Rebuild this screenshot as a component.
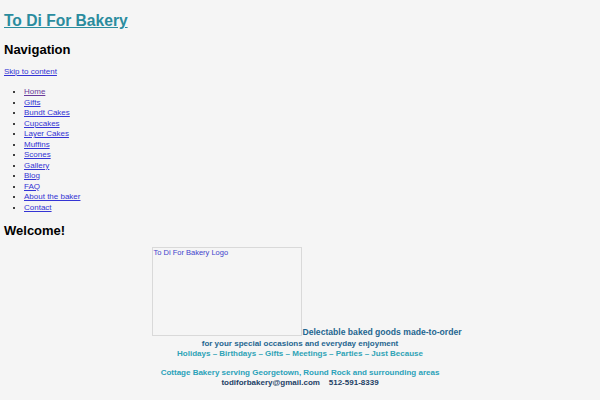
import React from 'react';

const navLinks = [
  'Home',
  'Gifts',
  'Bundt Cakes',
  'Cupcakes',
  'Layer Cakes',
  'Muffins',
  'Scones',
  'Gallery',
  'Blog',
  'FAQ',
  'About the baker',
  'Contact',
];

const App = () => {
  return (
    <div
      className="bg-[#f5f5f5] min-h-screen px-[4px] text-black"
      style={{ fontFamily: '"Liberation Sans", Arial, sans-serif' }}
    >
      {/* Site title */}
      <h1 className="pt-[11px] text-[15.6px] font-bold leading-[20px]">
        <a href="#" className="text-[#2a8c9e] underline">To Di For Bakery</a>
      </h1>

      {/* Navigation */}
      <h2 className="mt-[11px] text-[13px] leading-[16px] font-bold">Navigation</h2>
      <a href="#" className="block mt-[9px] text-[8px] leading-[10px] text-[#3434d4] underline w-max">
        Skip to content
      </a>
      <ul className="mt-[10px] list-disc pl-[20px] text-[8px] leading-[10.5px]">
        {navLinks.map((link, i) => (
          <li key={link}>
            <a href="#" className={i === 0 ? 'text-[#6a3a9a] underline' : 'text-[#3434d4] underline'}>
              {link}
            </a>
          </li>
        ))}
      </ul>

      {/* Welcome */}
      <h2 className="mt-[10px] text-[13px] leading-[16px] font-bold">Welcome!</h2>

      <div className="mt-[8px] text-center text-[8px] font-bold leading-[10.5px]">
        <p className="text-[#1f6690]">
          <span className="inline-block overflow-hidden ml-[14px] w-[150px] h-[89px] border border-[#d9d9d9] text-left -mb-[1px]">
            <span className="block text-[7.5px] font-normal leading-[9px] text-[#4242cc]">To Di For Bakery Logo</span>
          </span>
          <span className="text-[8.6px]">Delectable baked goods made-to-order</span>
          <br />
          for your special occasions and everyday enjoyment
        </p>
        <p className="text-[#2fa3b6]">Holidays – Birthdays – Gifts – Meetings – Parties – Just Because</p>
        <p className="mt-[8px] text-[#2aa2b9]">Cottage Bakery serving Georgetown, Round Rock and surrounding areas</p>
        <p className="text-[#1d3f66]">
          todiforbakery@gmail.com&nbsp;&nbsp;&nbsp;&nbsp;512-591-8339
        </p>
      </div>
    </div>
  );
};

export default App;
